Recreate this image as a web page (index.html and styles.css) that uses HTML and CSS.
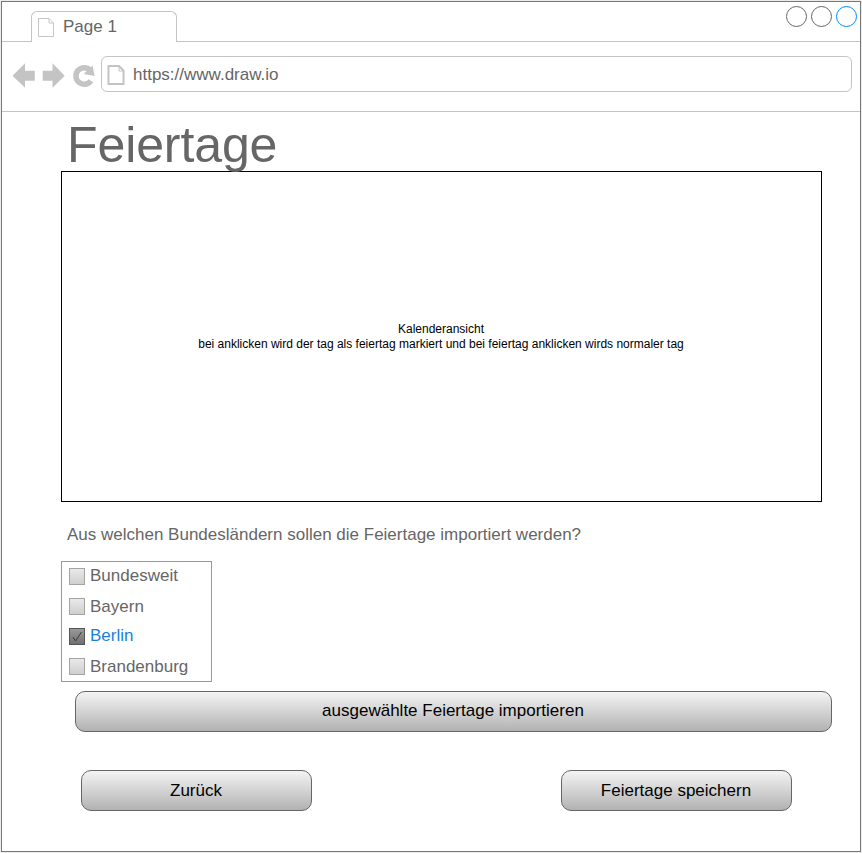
FILE: index.html
```
<!DOCTYPE html>
<html lang="de">
<head>
<meta charset="utf-8">
<title>Feiertage</title>
<link rel="stylesheet" href="styles.css">
</head>
<body>
<div class="browser">
  <header class="tabstrip">
    <div class="tab">
      <svg class="tab-icon" width="18" height="20" viewBox="0 0 18 20"><path d="M1.500 1.500H12L16.500 6V19.500H1.500ZM12 1.500V6H16.500" fill="none" stroke="#c6c6c6"/></svg>
      <span>Page 1</span>
    </div>
    <div class="window-controls"><i></i><i></i><i class="active"></i></div>
  </header>
  <nav class="toolbar">
    <svg class="nav-icons" width="88" height="36" viewBox="0 0 88 36" fill="#c4c4c4">
      <path d="M.5 19.700L13 7.300V14.700H22.800V24.700H13V31.800Z"/>
      <path d="M52.700 19.700L40.500 7.300V14.700H30.700V24.700H40.500V31.800Z"/>
      <path d="M79 24.800A8.300 8.300 0 1 1 78.100 14.100" fill="none" stroke="#c4c4c4" stroke-width="5.500"/>
      <path d="M80.500 9.500L82.700 20L71.700 18Z"/>
    </svg>
    <div class="address">
      <svg width="18" height="20" viewBox="0 0 18 20"><path d="M1.500 1H12L16.500 5.500V19H1.500Z" fill="none" stroke="#c4c4c4" stroke-width="2"/><path d="M12 1V6H16.500" fill="none" stroke="#c4c4c4"/></svg>
      <span>https://www.draw.io</span>
    </div>
  </nav>
  <main>
    <h1>Feiertage</h1>
    <section class="calendar">
      <p>Kalenderansicht<br>bei anklicken wird der tag als feiertag markiert und bei feiertag anklicken wirds normaler tag</p>
    </section>
    <p class="question">Aus welchen Bundesländern sollen die Feiertage importiert werden?</p>
    <ul class="states">
      <li><span class="box"></span><span class="name">Bundesweit</span></li>
      <li><span class="box"></span><span class="name low">Bayern</span></li>
      <li class="checked"><span class="box"><svg width="14" height="15" viewBox="0 0 14 15"><path d="M3 8L5.500 12L11.500 3" fill="none" stroke="#3c3c3c"/></svg></span><span class="name">Berlin</span></li>
      <li><span class="box"></span><span class="name low">Brandenburg</span></li>
    </ul>
    <button class="import">ausgewählte Feiertage importieren</button>
    <div class="actions"><button>Zurück</button><button>Feiertage speichern</button></div>
  </main>
</div>
</body>
</html>
```
FILE: styles.css
```
* { box-sizing: border-box; }
body {
  margin: 0;
  height: 853px;
  padding: 1px;
  overflow: hidden;
  background: #ececec;
  font: 17px/20px "Liberation Sans", Arial, sans-serif;
  color: #666;
}
.browser {
  width: 860px;
  height: 851px;
  border: 1px solid #777;
  background: #fff;
}
.tabstrip {
  height: 40px;
  display: flex;
  justify-content: space-between;
  padding: 4px 3px 0 29px;
  border-bottom: 1px solid #c4c4c4;
}
.tab {
  display: flex;
  width: 146px;
  height: 31px;
  margin-top: 5px;
  padding: 5px 0 0 5px;
  border: 1px solid #c4c4c4;
  border-bottom: 0;
  border-radius: 6px 6px 0 0;
  background: #fff;
}
.tab span { margin-left: 8px; }
.window-controls { display: flex; gap: 4px; }
.window-controls i {
  width: 21px;
  height: 21px;
  border: 1px solid #666;
  border-radius: 50%;
}
.window-controls .active { border-color: #008cff; }
.toolbar {
  height: 70px;
  display: flex;
  gap: 1px;
  padding: 14px 8px 0 10px;
  border-bottom: 1px solid #c4c4c4;
}
.address {
  flex: 1;
  height: 36px;
  display: flex;
  padding: 8px 0 0 5px;
  border: 1px solid #c4c4c4;
  border-radius: 6px;
}
.address span { margin-left: 8px; }
main { padding: 0 28px 0 59px; }
h1 {
  margin: 0;
  height: 59px;
  padding: 4px 0 0 6px;
  font-size: 50px;
  font-weight: 400;
  line-height: 58px;
  letter-spacing: -0.1px;
}
.calendar {
  width: 761px;
  height: 331px;
  display: flex;
  align-items: center;
  justify-content: center;
  padding-right: 1px;
  border: 1px solid #000;
  color: #000;
  font-size: 12px;
  line-height: 15px;
  text-align: center;
}
.calendar p { margin: 0; }
.question { margin: 23px 0 16px 6px; }
.states {
  width: 151px;
  height: 121px;
  margin: 0 0 9px;
  padding: 0 0 0 7px;
  border: 1px solid #999;
  list-style: none;
}
.states li { display: flex; height: 30px; padding-top: 4px; }
.box {
  width: 16px;
  height: 17px;
  margin: 2px 5px 0 0;
  border: 1px solid #a4a4a4;
  background: linear-gradient(#e9e9e9, #cfcfcf);
}
.box svg { display: block; }
.low { padding-top: 1px; }
.checked .name { color: #1a7fe0; }
.checked .box { border-color: #555; background: linear-gradient(#999, #707070); }
button {
  width: 231px;
  height: 41px;
  padding: 0 1px 0 0;
  border: 1px solid #666;
  border-radius: 10px;
  background: linear-gradient(#f4f4f4, #b2b2b2);
  color: #000;
  font: inherit;
}
.import { display: block; width: 757px; margin-left: 14px; padding-bottom: 2px; }
.actions {
  display: flex;
  justify-content: space-between;
  margin: 38px 40px 0 20px;
}
```
